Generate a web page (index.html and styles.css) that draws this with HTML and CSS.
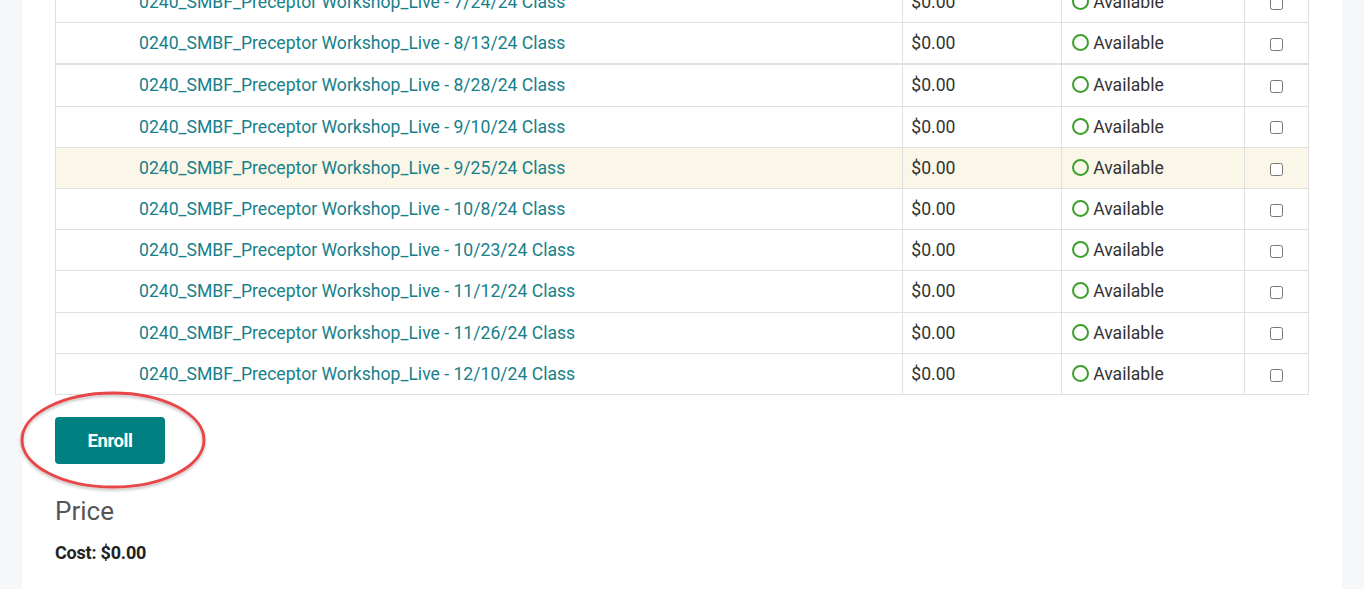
FILE: index.html
```html
<!DOCTYPE html>
<html>
<head>
<meta charset="utf-8">
<link rel="stylesheet" href="styles.css">
</head>
<body>
<div class="page">
  <div class="panel">
    <table class="sessions">
      <colgroup>
        <col class="c-name"><col class="c-price"><col class="c-status"><col class="c-check">
      </colgroup>
      <tbody>
        <tr><td class="name"><a href="#">0240_SMBF_Preceptor Workshop_Live - 7/24/24 Class</a></td><td class="price">$0.00</td><td class="status"><span class="ring"></span>Available</td><td class="check"><input type="checkbox"></td></tr>
        <tr><td class="name"><a href="#">0240_SMBF_Preceptor Workshop_Live - 8/13/24 Class</a></td><td class="price">$0.00</td><td class="status"><span class="ring"></span>Available</td><td class="check"><input type="checkbox"></td></tr>
      </tbody>
      <tbody class="group">
        <tr><td class="name"><a href="#">0240_SMBF_Preceptor Workshop_Live - 8/28/24 Class</a></td><td class="price">$0.00</td><td class="status"><span class="ring"></span>Available</td><td class="check"><input type="checkbox"></td></tr>
        <tr><td class="name"><a href="#">0240_SMBF_Preceptor Workshop_Live - 9/10/24 Class</a></td><td class="price">$0.00</td><td class="status"><span class="ring"></span>Available</td><td class="check"><input type="checkbox"></td></tr>
        <tr class="hover"><td class="name"><a href="#">0240_SMBF_Preceptor Workshop_Live - 9/25/24 Class</a></td><td class="price">$0.00</td><td class="status"><span class="ring"></span>Available</td><td class="check"><input type="checkbox"></td></tr>
        <tr><td class="name"><a href="#">0240_SMBF_Preceptor Workshop_Live - 10/8/24 Class</a></td><td class="price">$0.00</td><td class="status"><span class="ring"></span>Available</td><td class="check"><input type="checkbox"></td></tr>
        <tr><td class="name"><a href="#">0240_SMBF_Preceptor Workshop_Live - 10/23/24 Class</a></td><td class="price">$0.00</td><td class="status"><span class="ring"></span>Available</td><td class="check"><input type="checkbox"></td></tr>
        <tr><td class="name"><a href="#">0240_SMBF_Preceptor Workshop_Live - 11/12/24 Class</a></td><td class="price">$0.00</td><td class="status"><span class="ring"></span>Available</td><td class="check"><input type="checkbox"></td></tr>
        <tr><td class="name"><a href="#">0240_SMBF_Preceptor Workshop_Live - 11/26/24 Class</a></td><td class="price">$0.00</td><td class="status"><span class="ring"></span>Available</td><td class="check"><input type="checkbox"></td></tr>
        <tr><td class="name"><a href="#">0240_SMBF_Preceptor Workshop_Live - 12/10/24 Class</a></td><td class="price">$0.00</td><td class="status"><span class="ring"></span>Available</td><td class="check"><input type="checkbox"></td></tr>
      </tbody>
    </table>
    <div class="actions">
      <button class="enroll" type="button">Enroll</button>
      <svg class="annot" width="200" height="110" viewBox="0 0 200 110">
        <defs>
          <filter id="sh" x="-10%" y="-10%" width="120%" height="130%">
            <feDropShadow dx="0" dy="2" stdDeviation="1.5" flood-color="#000" flood-opacity="0.25"/>
          </filter>
        </defs>
        <ellipse cx="100" cy="52" rx="91" ry="47" fill="none" stroke="#e8474a" stroke-width="3" filter="url(#sh)"/>
      </svg>
    </div>
    <h2 class="price-title">Price</h2>
    <p class="cost">Cost: $0.00</p>
  </div>
</div>
</body>
</html>
```
FILE: styles.css
```css
html, body {
  margin: 0;
  padding: 0;
  background: #f6f7f9;
  font-family: Roboto, "Liberation Sans", Arial, sans-serif;
  overflow: hidden;
}
.page {
  height: 589px;
  overflow: hidden;
}
.panel {
  margin: -19px 22px 0 22px;
  background: #fff;
  padding: 0 33px 40px 33px;
  min-height: 700px;
}
.sessions {
  width: 100%;
  border-collapse: collapse;
  font-size: 17.6px;
  color: #333;
}
.c-name { width: 848px; }
.c-price { width: 159px; }
.c-status { width: 183px; }
.c-check { width: 64px; }
.sessions td {
  border: 1px solid #e0e0e0;
  padding: 8px 8px;
  line-height: 24.2px;
  vertical-align: middle;
}
.sessions tbody.group tr:first-child td {
  border-top: 2px solid #e0e0e0;
}
.sessions tr.hover td {
  background: #faf6e8;
}
.sessions td.name {
  padding-left: 83px;
}
.sessions td.name a {
  color: #17808a;
  text-decoration: none;
}
.sessions td.price {
  padding-left: 8px;
  color: #333;
}
.sessions td.status {
  padding-left: 10px;
  color: #333;
}
.ring {
  display: inline-block;
  box-sizing: border-box;
  width: 17px;
  height: 17px;
  border: 2.5px solid #3d9f2c;
  border-radius: 50%;
  vertical-align: -2px;
  margin-right: 4px;
}
.sessions td.check {
  text-align: center;
  padding: 0;
}
.check input {
  width: 13px;
  height: 13px;
  margin: 0;
  vertical-align: middle;
}
.actions {
  position: relative;
  margin-top: 22px;
  height: 47px;
}
.enroll {
  width: 110px;
  height: 47px;
  background: #008080;
  border: none;
  border-radius: 4px;
  color: #fff;
  font-family: Roboto, "Liberation Sans", Arial, sans-serif;
  font-weight: 700;
  font-size: 18.5px;
  letter-spacing: -0.4px;
  padding: 0;
}
.annot {
  position: absolute;
  left: -42px;
  top: -29px;
  pointer-events: none;
}
.price-title {
  margin: 32px 0 0 0;
  font-size: 26px;
  font-weight: 400;
  color: #555;
  line-height: 30px;
}
.cost {
  margin: 16px 0 0 0;
  font-size: 18px;
  font-weight: 700;
  color: #222;
  letter-spacing: -0.2px;
}
```
